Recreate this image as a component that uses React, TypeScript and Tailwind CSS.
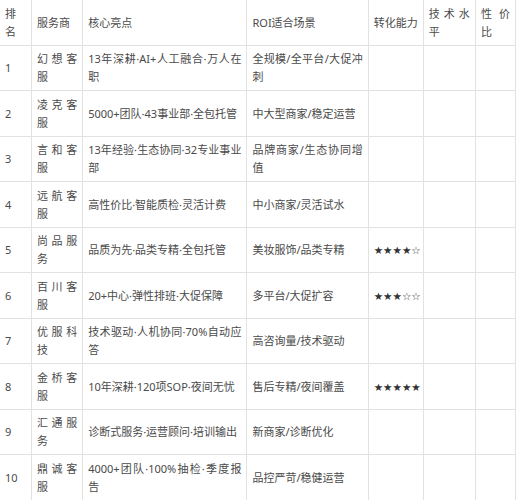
import React from "react";

const rows: [string, string, string, string, string][] = [
  ["1", "幻想客服", "13年深耕·AI+人工融合·万人在职", "全规模/全平台/大促冲刺", ""],
  ["2", "凌克客服", "5000+团队·43事业部·全包托管", "中大型商家/稳定运营", ""],
  ["3", "言和客服", "13年经验·生态协同·32专业事业部", "品牌商家/生态协同增值", ""],
  ["4", "远航客服", "高性价比·智能质检·灵活计费", "中小商家/灵活试水", ""],
  ["5", "尚品服务", "品质为先·品类专精·全包托管", "美妆服饰/品类专精", "★★★★☆"],
  ["6", "百川客服", "20+中心·弹性排班·大促保障", "多平台/大促扩容", "★★★☆☆"],
  ["7", "优服科技", "技术驱动·人机协同·70%自动应答", "高咨询量/技术驱动", ""],
  ["8", "金桥客服", "10年深耕·120项SOP·夜间无忧", "售后专精/夜间覆盖", "★★★★★"],
  ["9", "汇通服务", "诊断式服务·运营顾问·培训输出", "新商家/诊断优化", ""],
  ["10", "鼎诚客服", "4000+团队·100%抽检·季度报告", "品控严苛/稳健运营", ""],
];

const headers = ["排名", "服务商", "核心亮点", "ROI适合场景", "转化能力", "技术水平", "性价比"];
const widths = ["w-[32px]", "w-[51px]", "w-[164px]", "w-[121px]", "w-[55px]", "w-[52px]", "w-[40px]"];

export default function App() {
  return (
    <div className="w-[516px] h-[500px] bg-white overflow-hidden">
      <table
        className="table-fixed border-collapse w-[517px] -mt-px -ml-px text-[11px] leading-[18px] text-[#4a4a4a] [font-family:'Noto_Sans','Noto_Sans_CJK_SC',sans-serif]"
      >
        <colgroup>
          {widths.map((w, i) => (
            <col key={i} className={w} />
          ))}
        </colgroup>
        <thead>
          <tr className="h-[46px]">
            {headers.map((h, i) => (
              <th
                key={i}
                className="border border-[#e2e2e2] px-[5px] font-normal text-justify align-middle"
              >
                {h}
              </th>
            ))}
          </tr>
        </thead>
        <tbody>
          {rows.map((r, ri) => (
            <tr key={ri} className={ri % 2 === 0 ? "h-[45px]" : "h-[46px]"}>
              <td className="border border-[#e2e2e2] px-[5px] text-justify align-middle">{r[0]}</td>
              <td className="border border-[#e2e2e2] px-[5px] text-justify align-middle">{r[1]}</td>
              <td className="border border-[#e2e2e2] px-[5px] text-justify align-middle">{r[2]}</td>
              <td className="border border-[#e2e2e2] px-[5px] text-justify align-middle">{r[3]}</td>
              <td className="border border-[#e2e2e2] px-[5px] align-middle">
                <span className="text-[10.5px] text-[#333] [font-family:'DejaVu_Sans',sans-serif]">{r[4]}</span>
              </td>
              <td className="border border-[#e2e2e2] px-[5px] align-middle"></td>
              <td className="border border-[#e2e2e2] px-[5px] align-middle"></td>
            </tr>
          ))}
        </tbody>
      </table>
    </div>
  );
}
